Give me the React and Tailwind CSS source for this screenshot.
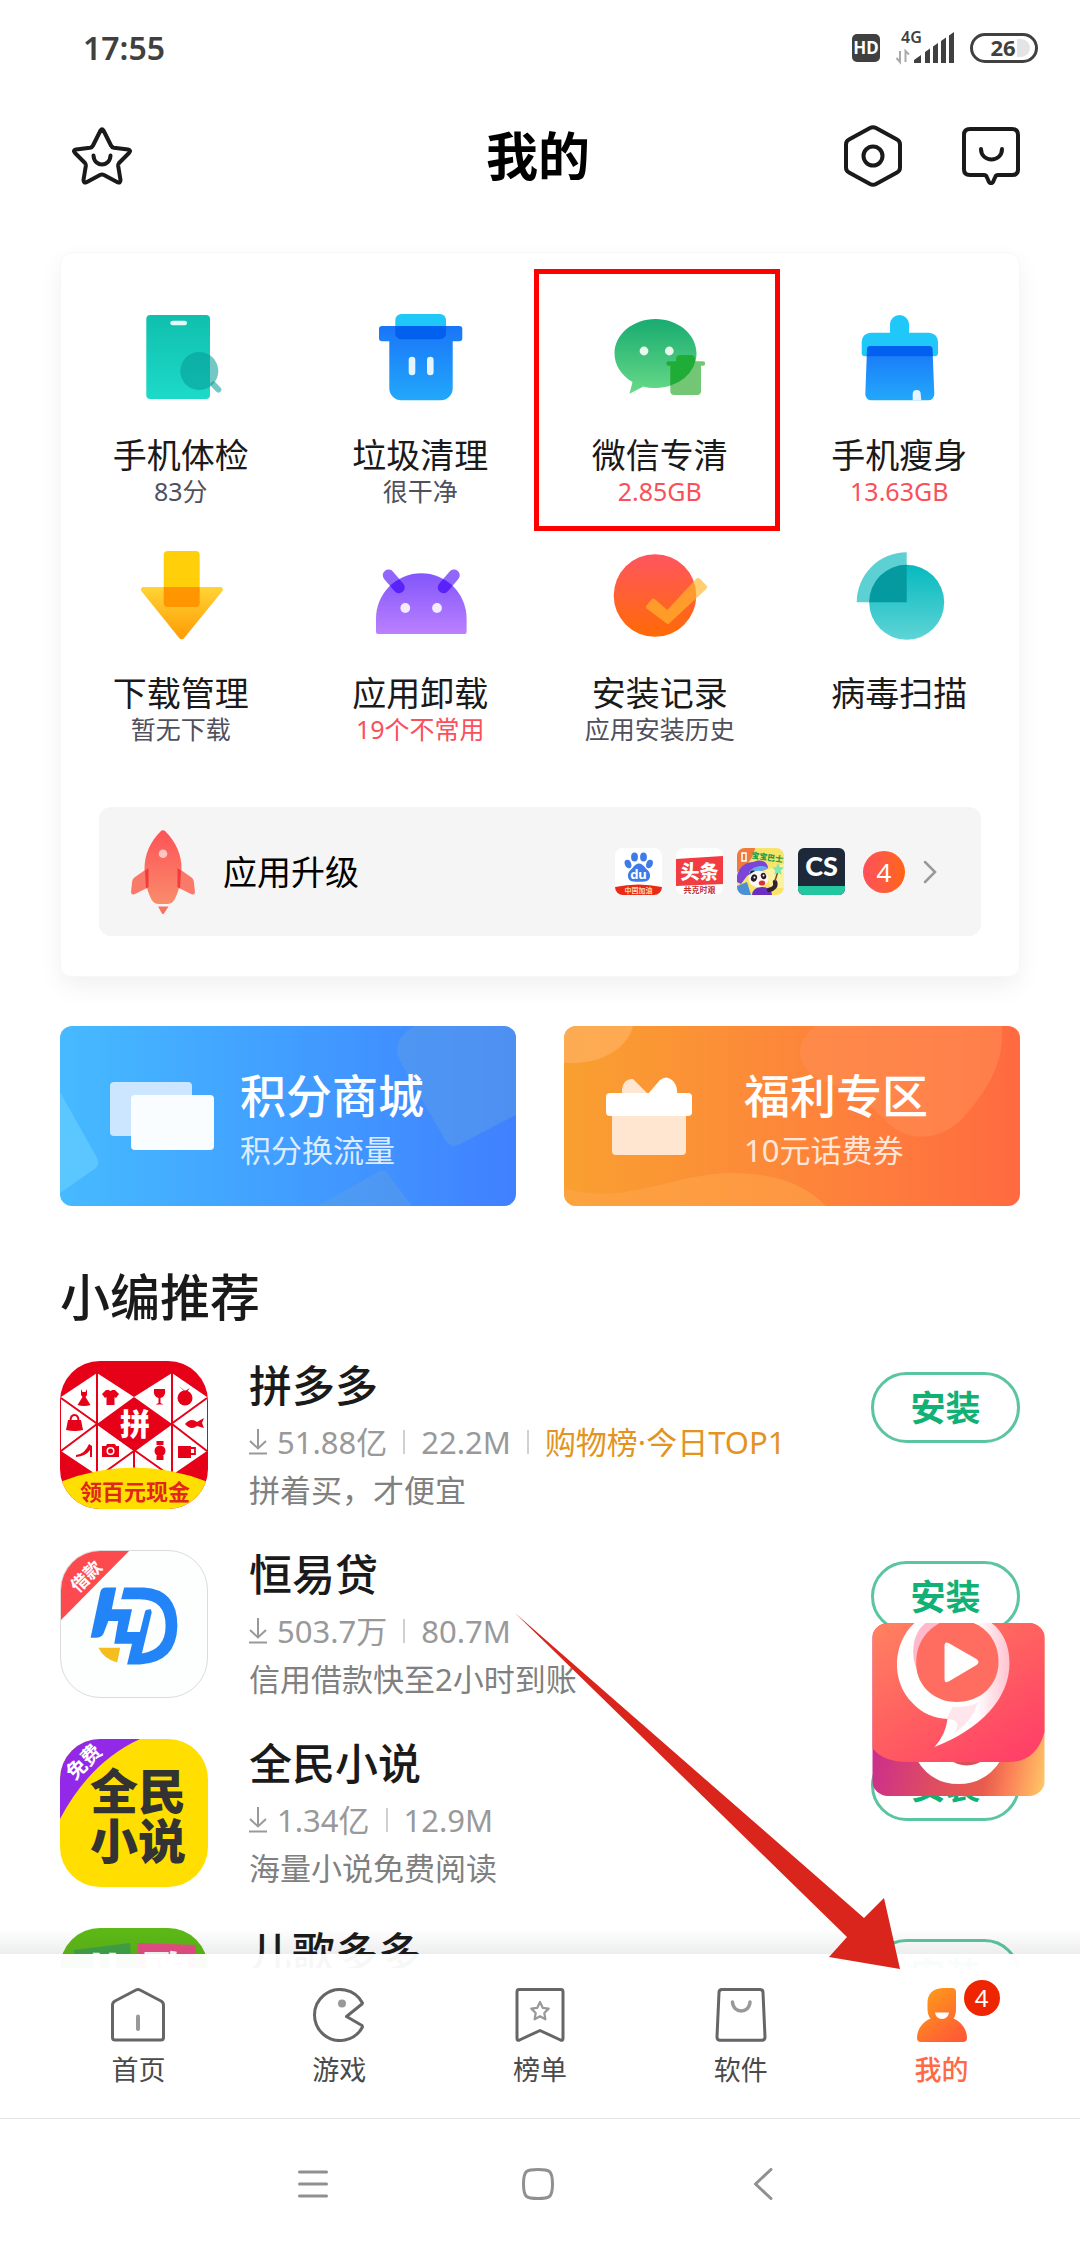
import React, { useState } from "react";

const HealthIcon = () => (
  <svg viewBox="0 0 96 96" className="size-24">
    <defs>
      <linearGradient id="health" x1="0" y1="0" x2="0" y2="1">
        <stop offset="0" stopColor="#10bfae" />
        <stop offset="1" stopColor="#1ddac8" />
      </linearGradient>
    </defs>
    <rect x="13.3" y="6" width="63.7" height="84" rx="4" fill="url(#health)" />
    <rect x="37.3" y="11.7" width="16.7" height="4.6" rx="2.3" fill="#e4faf7" />
    <circle cx="66.3" cy="62" r="19" fill="#069c96" fillOpacity="0.56" />
    <path d="M80.5 75.5l4.8 5" stroke="#069c96" strokeOpacity="0.56" strokeWidth="6" strokeLinecap="round" />
  </svg>
);

const TrashIcon = () => (
  <svg viewBox="0 0 96 96" className="size-24">
    <defs>
      <linearGradient id="trash" x1="0" y1="0" x2="0" y2="1">
        <stop offset="0" stopColor="#1a75f8" />
        <stop offset="1" stopColor="#22a8fb" />
      </linearGradient>
    </defs>
    <rect x="23.3" y="5" width="50.7" height="25" rx="6" fill="#1fc8f8" />
    <path
      d="M10 17H87.300a3 3 0 0 1 3 3V29.300a3 3 0 0 1-3 3H80.700V79.300a12 12 0 0 1-12 12H29.300a12 12 0 0 1-12-12V32.300H10a3 3 0 0 1-3-3V20a3 3 0 0 1 3-3z"
      fill="url(#trash)"
    />
    <path d="M23.300 17H74V24.300a6 6 0 0 1-6 6H29.300a6 6 0 0 1-6-6z" fill="#0260ee" />
    <rect x="36.7" y="47.700" width="6.600" height="18.600" rx="3.300" fill="#e6f4ff" />
    <rect x="55" y="47.700" width="6.600" height="18.600" rx="3.300" fill="#e6f4ff" />
  </svg>
);

const WechatIcon = () => (
  <svg viewBox="0 0 96 96" className="size-24">
    <defs>
      <linearGradient id="wechat" x1="0" y1="0" x2="0" y2="1">
        <stop offset="0" stopColor="#18ab70" />
        <stop offset="1" stopColor="#68da88" />
      </linearGradient>
      <clipPath id="bubble">
        <ellipse cx="43.5" cy="44.500" rx="41" ry="34.500" />
      </clipPath>
    </defs>
    <path
      d="M43.500 10C66.100 10 84.500 25.400 84.500 44.500S66.100 79 43.500 79C39.200 79 35.100 78.400 31.400 77.400L17.500 84.700L20.500 73C9.600 66.700 2.500 56.300 2.500 44.500C2.500 25.400 20.900 10 43.500 10z"
      fill="url(#wechat)"
    />
    <path
      d="M64 52V50a4 4 0 0 1 4-4H79a4 4 0 0 1 4 4V52.300H91a2.200 2.200 0 0 1 0 4.400H89V82a4 4 0 0 1-4 4H62.300a4 4 0 0 1-4-4V56.700H56.500a2.200 2.200 0 0 1 0-4.400H64z"
      fill="#73c774"
    />
    <path
      d="M64 52V50a4 4 0 0 1 4-4H79a4 4 0 0 1 4 4V52.300H91a2.200 2.200 0 0 1 0 4.400H89V82a4 4 0 0 1-4 4H62.300a4 4 0 0 1-4-4V56.700H56.500a2.200 2.200 0 0 1 0-4.400H64z"
      fill="#1fac37"
      clipPath="url(#bubble)"
    />
    <circle cx="32" cy="42" r="4.400" fill="#e9f9ee" />
    <circle cx="57.300" cy="42" r="4.400" fill="#e9f9ee" />
  </svg>
);

const BrushIcon = () => (
  <svg viewBox="-2 0 96 96" className="size-24">
    <path
      d="M37 23.700V15.500a9.500 9.500 0 0 1 19 0V23.700H76a9 9 0 0 1 9 9V44a3.300 3.300 0 0 1-3.300 3.300H12a3.300 3.300 0 0 1-3.300-3.300V32.700a9 9 0 0 1 9-9z"
      fill="#1fc8f8"
    />
    <path
      d="M17.500 37H76a3.500 3.500 0 0 1 3.500 3.500L81.300 85a6 6 0 0 1-6 6.300H18.300a6 6 0 0 1-6-6.300L14 40.500A3.500 3.500 0 0 1 17.500 37z"
      fill="url(#trash)"
    />
    <path d="M17.500 37H76a3.500 3.500 0 0 1 3.500 3.500L79.700 47.300H13.800L14 40.500A3.500 3.500 0 0 1 17.500 37z" fill="#0260ee" />
    <path d="M59.700 91.300V85a4 4 0 0 1 8 0L68.300 91.300z" fill="#e6f4ff" />
  </svg>
);

const DownloadIcon = () => (
  <svg viewBox="0 0 96 96" className="size-24">
    <defs>
      <linearGradient id="down" x1="0" y1="0" x2="0" y2="1">
        <stop offset="0" stopColor="#ffd435" />
        <stop offset="1" stopColor="#ff9b05" />
      </linearGradient>
    </defs>
    <rect x="30.700" y="4" width="36" height="56" rx="4" fill="#ffd00a" />
    <path
      d="M10.500 40H87.200a2.500 2.500 0 0 1 2 4.200L51 91.200a3 3 0 0 1-4.600 0L8.500 44.200a2.500 2.500 0 0 1 2-4.200z"
      fill="url(#down)"
    />
    <path d="M30.700 40H66.700V56a4 4 0 0 1-4 4H34.700a4 4 0 0 1-4-4z" fill="#ff9500" />
  </svg>
);

const UninstallIcon = () => (
  <svg viewBox="0 0 96 96" className="size-24">
    <defs>
      <linearGradient id="droid" x1="0" y1="0" x2="0" y2="1">
        <stop offset="0" stopColor="#8256fb" />
        <stop offset="1" stopColor="#bb80fe" />
      </linearGradient>
      <clipPath id="dome">
        <path d="M4 71.500a45.300 45.300 0 0 1 90.600 0V87H4z" />
      </clipPath>
    </defs>
    <g stroke="#9066fb" strokeWidth="11.500" strokeLinecap="round">
      <path d="M16.500 28.300L27 40.500" />
      <path d="M82 28.300L71.500 40.500" />
    </g>
    <path d="M4 71.500a45.300 45.300 0 0 1 90.600 0V85a2 2 0 0 1-2 2H6a2 2 0 0 1-2-2z" fill="url(#droid)" />
    <g stroke="#5a22fb" strokeWidth="11.500" strokeLinecap="round" clipPath="url(#dome)">
      <path d="M16.500 28.300L27 40.500" />
      <path d="M82 28.300L71.500 40.500" />
    </g>
    <circle cx="33.300" cy="61" r="4.900" fill="#f3ecff" />
    <circle cx="65" cy="61" r="4.900" fill="#f3ecff" />
  </svg>
);

const RecordIcon = () => (
  <svg viewBox="0 0 96 96" className="size-24">
    <defs>
      <linearGradient id="record" x1="0" y1="0" x2="0" y2="1">
        <stop offset="0" stopColor="#ff5560" />
        <stop offset="1" stopColor="#ff6b05" />
      </linearGradient>
    </defs>
    <circle cx="43" cy="48.500" r="41.300" fill="url(#record)" />
    <path
      d="M34.500 61.500Q33.500 60 34.500 58.500L39.500 52.500Q41 50.800 43 52.300L55.300 63L84 32Q86 30 88 31.800L94.500 38.500Q96 40.500 94 42.300L56 77.500z"
      fill="#ffb72e"
      fillOpacity="0.68"
    />
  </svg>
);

const VirusIcon = () => (
  <svg viewBox="-2 0 96 96" className="size-24">
    <defs>
      <linearGradient id="virus" x1="0" y1="0" x2="0" y2="1">
        <stop offset="0" stopColor="#05babf" />
        <stop offset="1" stopColor="#5fd4d6" />
      </linearGradient>
    </defs>
    <path d="M53.700 5.300V55.300H3.700a50 50 0 0 1 50-50z" fill="#5dd0d4" />
    <circle cx="53.700" cy="55.300" r="37.500" fill="url(#virus)" />
    <path d="M53.700 17.800V55.300H16.200a37.500 37.500 0 0 1 37.500-37.500z" fill="#0599a0" />
  </svg>
);

const RocketIcon = () => (
  <svg viewBox="0 0 64 84" className="h-[84px] w-16 shrink-0">
    <defs>
      <linearGradient id="rocket" x1="0" y1="0" x2="0" y2="1">
        <stop offset="0" stopColor="#fd5357" />
        <stop offset="1" stopColor="#fa8c6b" />
      </linearGradient>
    </defs>
    <path d="M17 38L4 47Q1 49 1 53L0 62Q0 65 3 64.500L18 57z" fill="#fa7a6a" />
    <path d="M47 38L60 47Q63 49 63 53L64 62Q64 65 61 64.500L46 57z" fill="#fa7a6a" />
    <path
      d="M29.500 1.500Q32-1 34.500 1.500C45 12 50.500 25 50.500 38C50.500 50 48 61 43.500 69.500Q41 74 36 74H28Q23 74 20.500 69.500C16 61 13.500 50 13.500 38C13.500 25 19 12 29.500 1.500z"
      fill="url(#rocket)"
    />
    <path d="M14 40.500L17.500 38V57L15 58.500z" fill="#f5393c" />
    <path d="M50 40.500L46.500 38V57L49 58.500z" fill="#f5393c" />
    <path d="M27 76.500H37.500L33 83.500Q32 84.500 31 83.500z" fill="#fa7262" />
    <circle cx="32" cy="23.700" r="4.300" fill="#fdc4c0" />
  </svg>
);

const BaiduIcon = () => (
  <svg viewBox="0 0 47 47" className="size-[47px] rounded-lg bg-white">
    <g fill="#3f7be8">
      <ellipse cx="19.500" cy="9" rx="3.400" ry="4.600" />
      <ellipse cx="28.500" cy="9" rx="3.400" ry="4.600" />
      <ellipse cx="13" cy="16" rx="3.200" ry="4.400" transform="rotate(-20 13 16)" />
      <ellipse cx="34.500" cy="16" rx="3.200" ry="4.400" transform="rotate(20 34.500 16)" />
      <path d="M24 15.500c4 0 5.500 4 8.500 6.500c4 3.500 3.500 11-2.500 11.500c-4 .3-8 .3-12 0c-6-.5-6.500-8-2.500-11.500c3-2.500 4.500-6.500 8.500-6.500z" />
    </g>
    <text x="23.500" y="31" fontSize="13" fontWeight="700" fill="#fff" textAnchor="middle">du</text>
    <path d="M0 39Q23 34 47 39V47H0z" fill="#e92a17" />
    <text x="23.500" y="45" fontSize="7" fontWeight="700" fill="#ffd9b0" textAnchor="middle">中国加油</text>
  </svg>
);

const ToutiaoIcon = () => (
  <svg viewBox="0 0 47 47" className="size-[47px] rounded-lg bg-white">
    <path d="M0 11L47 8V36L0 38z" fill="#f23c41" />
    <text x="23.500" y="31" fontSize="19" fontWeight="900" fill="#fff" textAnchor="middle">头条</text>
    <text x="23.500" y="45" fontSize="8" fontWeight="700" fill="#c8312f" textAnchor="middle">共克时艰</text>
  </svg>
);

const BabyBusIcon = () => (
  <svg viewBox="0 0 47 47" className="size-[47px] rounded-lg bg-[#f9e46a]">
    <path d="M0 0H18Q16 14 0 24z" fill="#f0793c" />
    <path d="M5 5h4v8h-4z" fill="none" stroke="#fff" strokeWidth="1.500" />
    <path d="M28 22L47 16V40L34 40z" fill="#fbf2a0" />
    <text x="14" y="10" fontSize="8" fontWeight="900" fill="#1fa04c" transform="rotate(8 14 10)">宝宝巴士</text>
    <path d="M0 28C2 18 10 14 16 14C24 10 31 14 31 20C26 24 18 22 10 28L4 36L0 34z" fill="#7b45d8" />
    <path d="M12 24C16 18 26 16 31 20C26 24 20 22 14 28z" fill="#66a9ee" />
    <path d="M0 47V38L10 34L14 47z" fill="#4b8fd6" />
    <path d="M15 47Q16 39 25 39T35 47z" fill="#6b2fc0" />
    <ellipse cx="16" cy="25" rx="2.800" ry="2.400" fill="#231b28" />
    <ellipse cx="21.500" cy="31" rx="10" ry="8.200" fill="#fff7f2" />
    <ellipse cx="17" cy="30" rx="3" ry="3.700" fill="#231b28" transform="rotate(20 17 30)" />
    <ellipse cx="26.500" cy="28" rx="2.600" ry="3.300" fill="#231b28" transform="rotate(-20 26.500 28)" />
    <circle cx="17.500" cy="29.500" r="1" fill="#fff" />
    <circle cx="26.500" cy="27.500" r="1" fill="#fff" />
    <ellipse cx="25" cy="35" rx="3.200" ry="2.600" fill="#d8323c" />
    <path d="M32 42Q40 40 38 34" stroke="#33222e" strokeWidth="4.500" strokeLinecap="round" fill="none" />
    <path d="M38 33L41 23" stroke="#7a4a20" strokeWidth="1.500" />
    <path d="M41 15l1.800 4 4 .5-3 3 .8 4.200-3.600-2-3.600 2 .8-4.200-3-3 4-.5z" fill="#7fe8b0" />
  </svg>
);

const CamScannerIcon = () => (
  <svg viewBox="0 0 47 47" className="size-[47px] rounded-md bg-[#1d2939]">
    <rect y="38" width="47" height="9" fill="#24c6a0" />
    <text x="23.500" y="28" fontSize="27" fontWeight="900" fill="#fff" textAnchor="middle" className="font-[Lato,sans-serif]">
      CS
    </text>
  </svg>
);

const PddIcon = () => (
  <svg viewBox="0 0 148 148" className="size-[148px] shrink-0 rounded-[40px] bg-[#e60018]">
    <path d="M1 36L37 12L74 36L112 12L147 36V90L112 114H37L1 90z" fill="#fff" />
    <path d="M74 36L112 63L74 90L37 63z" fill="#e60018" />
    <g stroke="#e60018" strokeWidth="2" fill="none">
      <path d="M37 10V114M112 10V114M74 90V110" />
      <path d="M1 37L112 116M147 37L38 116M1 90L37 63M147 90L112 63" />
    </g>
    <g fill="#e60018">
      {/* 连衣裙、T恤、酒杯、水果 */}
      <path d="M21 28l1.500 3h3l1.500-3v6l-1.500 2l5 8q-6.500 2-13 0l5-8l-1.500-2z" />
      <path d="M46 29h3q1.500 2 3 0h3l4 4-3 4-1.500-1v8h-8v-8l-1.500 1-3-4z" />
      <path d="M94 28h11q1 8-4.500 9v5l3 1.500h-8l3-1.500v-5q-5.500-1-4.500-9z" />
      <circle cx="125" cy="37" r="7.500" />
      <path d="M119 25l6 5 5-3-4 5z" />
      {/* 手提包、鱼 */}
      <path d="M8 59h13l2 10q-8 2-17 0z" />
      <path d="M10.500 60q0-6 4-6t4 6" fill="none" stroke="#e60018" strokeWidth="2" />
      <path d="M125 63q6-7 12-2l7-4-2 5 2 5-7-2q-6 5-12-2z" />
      {/* 高跟鞋、相机 */}
      <path d="M16 94q9-1 13-11l3 2v11h-2v-7q-4 6-14 7z" />
      <path d="M42 85h4l1-2h8l1 2h3v11H42z" />
      <circle cx="50.500" cy="90" r="4" fill="#fff" />
      <circle cx="50.500" cy="90" r="2.500" />
      {/* 手表、茶杯 */}
      <circle cx="100" cy="90" r="5.500" />
      <path d="M96.500 80h7v4h-7zM96.500 95h7v4h-7z" />
      <path d="M118 85h13v12h-13z" />
    </g>
    <path d="M131 87h4v6h-4" fill="none" stroke="#e60018" strokeWidth="1.800" />
    <text x="75" y="74" fontSize="30" fontWeight="900" fill="#fff" textAnchor="middle">拼</text>
    <path d="M0 121Q74 92 148 121V148H0z" fill="#ffdf00" />
    <text x="75" y="139" fontSize="22" fontWeight="700" fill="#e1261c" textAnchor="middle">领百元现金</text>
  </svg>
);

const LoanIcon = () => (
  <svg viewBox="0 0 148 148" className="size-[148px] shrink-0 rounded-[40px] border border-[#dcdcdc] bg-[#fdfefe]">
    <path d="M0 0H69L0 70z" fill="#fd4a4e" />
    <text x="26" y="32" fontSize="18" fontWeight="700" fill="#fff" textAnchor="middle" transform="rotate(-45 26 26)">
      借款
    </text>
    <path
      d="M46 37H56L51.500 59H72L67 82H80L85 62Q85 59 91 59L92 62L82 104Q106 100 106 76Q106 49 80 49H61L64 37H84Q118 39 118 76Q117 113 80 115H67L72 94H54L58 71H48L43 84Q41 88 35 88H30L40 41Q41 37 46 37z"
      fill="#2384f7"
    />
    <path d="M38 98H60L57 113Q43 109 38 98z" fill="#f5be1c" />
  </svg>
);

const NovelIcon = () => (
  <svg viewBox="0 0 148 148" className="size-[148px] shrink-0 rounded-[40px] bg-[#ffde00]">
    <path d="M0 0H80Q30 23 0 80z" fill="#9329e8" />
    <text x="24" y="30" fontSize="20" fontWeight="700" fill="#fff" textAnchor="middle" transform="rotate(-45 24 23)">
      免费
    </text>
    <g fontSize="48" fontWeight="900" fill="#333" textAnchor="middle">
      <text x="78" y="70">全民</text>
      <text x="78" y="120">小说</text>
    </g>
  </svg>
);

const SongIcon = () => (
  <svg viewBox="0 0 148 148" className="size-[148px] shrink-0 rounded-[40px] bg-[#5db916]">
    <path d="M14 22L70 15L74 78L18 82z" fill="#3fa347" />
    <path d="M78 15L136 17L132 80L76 76z" fill="#e84d84" />
    <g fontSize="46" fontWeight="900" fill="#fff" textAnchor="middle">
      <text x="45" y="62">儿</text>
      <text x="106" y="62">歌</text>
    </g>
  </svg>
);

const HomeTab = () => (
  <svg viewBox="0 0 54 54" className="size-[54px]" fill="none" stroke="#666" strokeWidth="3" strokeLinejoin="round" strokeLinecap="round">
    <path d="M25 2Q27 1 29 2L50 13Q52.500 14.500 52.500 17V49.500Q52.500 52 50 52H4Q1.500 52 1.500 49.500V17Q1.500 14.500 4 13z" />
    <path d="M27 28.500V41" stroke="#999" strokeWidth="4" />
  </svg>
);

const GameTab = () => (
  <svg viewBox="0 0 54 54" className="size-[54px]" fill="none" stroke="#666" strokeWidth="3" strokeLinejoin="round" strokeLinecap="round">
    <path d="M50.500 15A25.500 25.500 0 1 0 50.500 39L50 37.500L34.500 28.500L50 16z" />
    <circle cx="30" cy="15.500" r="4" fill="#999" stroke="none" />
  </svg>
);

const RankTab = () => (
  <svg viewBox="0 0 54 54" className="size-[54px]" fill="none" stroke="#666" strokeWidth="3" strokeLinejoin="round">
    <path d="M6 1.500H48Q50 1.500 50 4V50.500Q50 53 47.500 52L27 42.500L6.500 52Q4 53 4 50.500V4Q4 1.500 6 1.500z" />
    <path d="M27 14l2.700 5.800 6 .8-4.400 4.400 1.100 6.300-5.400-3-5.400 3 1.100-6.300-4.400-4.400 6-.8z" stroke="#999" strokeWidth="2.200" />
  </svg>
);

const SoftTab = () => (
  <svg viewBox="0 0 54 54" className="size-[54px]" fill="none" stroke="#666" strokeWidth="3" strokeLinejoin="round" strokeLinecap="round">
    <path d="M8 1.500H46Q49 1.500 49 4.500L51 49Q51 52.300 48 52.300H6Q3 52.300 3 49L5 4.500Q5 1.500 8 1.500z" />
    <path d="M18.500 14C19 26 35.500 26 36 14" stroke="#999" strokeWidth="3.500" />
  </svg>
);

const MineTab = () => (
  <svg viewBox="0 0 54 54" className="size-[54px]">
    <defs>
      <linearGradient id="mine" x1="0" y1="0" x2="0.7" y2="1">
        <stop offset="0" stopColor="#ffa116" />
        <stop offset="1" stopColor="#ff5c35" />
      </linearGradient>
    </defs>
    <path
      d="M28 0H37Q41 0 41 4V21Q41 27 38.500 30.500C47 34 52 42 52 50Q52 54 48 54H6Q2 54 2 50C2 42 7 34 15.500 30.500Q12.500 27 12.500 21V15Q12.500 1 28 0z"
      fill="url(#mine)"
    />
    <path d="M20 24.500H34Q33 31 27 31T20 24.500z" fill="#fff" />
  </svg>
);

const tools = [
  { name: "手机体检", note: "83分", Icon: HealthIcon },
  { name: "垃圾清理", note: "很干净", Icon: TrashIcon },
  { name: "微信专清", note: "2.85GB", warn: true, marked: true, Icon: WechatIcon },
  { name: "手机瘦身", note: "13.63GB", warn: true, Icon: BrushIcon },
  { name: "下载管理", note: "暂无下载", Icon: DownloadIcon },
  { name: "应用卸载", note: "19个不常用", warn: true, Icon: UninstallIcon },
  { name: "安装记录", note: "应用安装历史", Icon: RecordIcon },
  { name: "病毒扫描", note: "", Icon: VirusIcon },
];

const apps = [
  { name: "拼多多", count: "51.88亿", size: "22.2M", rank: "购物榜·今日TOP1", desc: "拼着买，才便宜", Icon: PddIcon },
  { name: "恒易贷", count: "503.7万", size: "80.7M", desc: "信用借款快至2小时到账", Icon: LoanIcon },
  { name: "全民小说", count: "1.34亿", size: "12.9M", desc: "海量小说免费阅读", Icon: NovelIcon },
  { name: "儿歌多多", Icon: SongIcon },
];

const tabs = [
  { name: "首页", Icon: HomeTab },
  { name: "游戏", Icon: GameTab },
  { name: "榜单", Icon: RankTab },
  { name: "软件", Icon: SoftTab },
  { name: "我的", badge: 4, Icon: MineTab },
];

function StatusBar() {
  return (
    <div className="flex h-24 shrink-0 items-center justify-between pr-[42px] pl-[83px] text-[#404040]">
      <span className="text-[32px] leading-10 font-semibold">17:55</span>
      <div className="flex items-center gap-4">
        <svg viewBox="0 0 28 28" className="size-7">
          <rect width="28" height="28" rx="5" fill="#404040" />
          <text x="14" y="20" fontSize="17" fontWeight="700" fill="#fff" textAnchor="middle">HD</text>
        </svg>
        <svg viewBox="0 0 58 32" className="h-8 w-[58px] overflow-visible">
          <text x="5" y="11" fontSize="16" fontWeight="600" fill="#404040">4G</text>
          <path d="M4 19V30L0.500 26M9.500 30V19L13 22.500" fill="none" stroke="#aaa" strokeWidth="2" />
          <path d="M18 31V28L25 23V31zM29 31V20L34 16.500V31zM37 31V14.500L42 11V31zM45 31V9L50 5.500V31zM53 31V3.500L58 0V31z" fill="#404040" />
        </svg>
        <svg viewBox="0 0 68 30" className="h-[30px] w-[68px]">
          <path d="M47 6H51a9 9 0 0 1 0 18H47z" fill="#e4e4e4" />
          <rect x="1.500" y="1.500" width="65" height="27" rx="13.500" fill="none" stroke="#404040" strokeWidth="3" />
          <text x="33" y="23" fontSize="22" fontWeight="700" fill="#404040" textAnchor="middle">26</text>
        </svg>
      </div>
    </div>
  );
}

function Header() {
  return (
    <header className="grid h-[120px] shrink-0 grid-cols-[1fr_auto_1fr] items-center pr-[60px] pl-14">
      <button aria-label="收藏" className="justify-self-start pl-4">
        <svg viewBox="0 0 60 58" className="h-[58px] w-[60px]" fill="none" stroke="#1a1a1a" strokeWidth="4" strokeLinejoin="round" strokeLinecap="round">
          <path d="M28.500 3.500Q30 1 31.500 3.500L39 18.500Q40 20.500 42 20.800L56 22.500Q59.500 23.300 57 26L47 36Q46 37.500 46.200 39L48.500 53Q48.500 56.500 45.500 55.200L32 48Q30 47 28 48L14.500 55.200Q11.500 56.500 11.500 53L13.800 39Q14 37.500 13 36L3 26Q0.500 23.300 4 22.500L18 20.800Q20 20.500 21 18.500z" />
          <path d="M21.500 28.500C22 40.500 38 40.500 38.500 28.500" />
        </svg>
      </button>
      <h1 className="text-[52px] leading-[60px] font-bold text-black">我的</h1>
      <div className="flex items-center gap-[60px] justify-self-end">
        <button aria-label="设置">
          <svg viewBox="0 0 58 62" className="h-[62px] w-[58px]" fill="none" stroke="#1a1a1a" strokeWidth="4" strokeLinejoin="round">
            <path d="M26 3Q29 1.300 32 3L53 14.500Q56 16 56 19.500V42.500Q56 46 53 47.500L32 59Q29 60.700 26 59L5 47.500Q2 46 2 42.500V19.500Q2 16 5 14.500z" />
            <circle cx="29" cy="31" r="9.500" />
          </svg>
        </button>
        <button aria-label="消息">
          <svg viewBox="0 0 58 58" className="size-[58px]" fill="none" stroke="#1a1a1a" strokeWidth="4" strokeLinejoin="round" strokeLinecap="round">
            <path d="M8 2H50Q56 2 56 8V42.500Q56 48 50 48H36Q34 48 33.200 50L31 55Q29 57.500 27 55L24.800 50Q24 48 22 48H8Q2 48 2 42.500V8Q2 2 8 2z" />
            <path d="M19 22C19 36 40 36 40 22" />
          </svg>
        </button>
      </div>
    </header>
  );
}

function ToolCard() {
  return (
    <section className="mx-[60px] mt-9 rounded-xl border border-[#f7f7f7] pt-14 pb-10 shadow-[0_10px_24px_rgba(0,0,0,0.06)]">
      <div className="grid grid-cols-4 gap-y-10">
        {tools.map(({ name, note, warn, marked, Icon }) => (
          <button key={name} className="relative flex flex-col items-center">
            <Icon />
            <span className="mt-[30px] text-[34px] leading-10 text-[#1a1a1a]">{name}</span>
            <span className={`text-[25px] leading-8 ${warn ? "text-[#f9505a]" : "text-[#50505c]"}`}>{note}</span>
            {marked && <span className="absolute -top-10 right-0 -bottom-6 -left-[6px] border-[5px] border-[#ff0000]" />}
          </button>
        ))}
      </div>
      <div className="mt-[62px] px-[38px]">
        <button className="flex h-[129px] w-full items-center rounded-xl bg-[#f5f5f5] pr-11 pl-8">
          <RocketIcon />
          <span className="ml-7 text-[34px] leading-10 text-black">应用升级</span>
          <span className="ml-auto flex items-center gap-[14px]">
            <BaiduIcon />
            <ToutiaoIcon />
            <BabyBusIcon />
            <CamScannerIcon />
          </span>
          <span className="ml-[18px] flex size-[42px] items-center justify-center rounded-full bg-linear-to-r from-[#ff5058] to-[#ff650a] text-[26px] leading-8 text-white">
            4
          </span>
          <svg viewBox="0 0 14 24" className="ml-[18px] h-6 w-[14px]" fill="none" stroke="#999" strokeWidth="2.500" strokeLinecap="round">
            <path d="M2 2L12 12L2 22" />
          </svg>
        </button>
      </div>
    </section>
  );
}

function Banners() {
  return (
    <section className="mx-[60px] mt-[49px] grid grid-cols-2 gap-12">
      <button className="relative flex h-[180px] items-center overflow-hidden rounded-xl bg-linear-to-r from-[#46baff] to-[#4080ff] pl-[50px] text-left text-white">
        <svg viewBox="0 0 456 180" preserveAspectRatio="none" className="absolute inset-0 size-full">
          <path d="M354 0Q330 15 340 35L384 112Q390 125 402 117L456 89V0z" fill="#5a9de8" fillOpacity="0.55" />
          <path d="M0 66L36 130Q41 137 36 142L0 167z" fill="#6bd0ff" fillOpacity="0.6" />
          <path d="M257 180L318 146Q325 142 329 149L352 180z" fill="#5a9de8" fillOpacity="0.5" />
        </svg>
        <svg viewBox="0 0 104 68" className="relative h-[68px] w-[104px]">
          <rect width="82" height="54" rx="4" fill="#cde6ff" />
          <rect x="21" y="13" width="83" height="55" rx="4" fill="#fafdff" />
        </svg>
        <span className="relative ml-[26px] flex flex-col pt-2">
          <span className="text-[46px] leading-[60px] font-medium">积分商城</span>
          <span className="text-[31px] leading-[50px] text-[#dcecff]">积分换流量</span>
        </span>
      </button>
      <button className="relative flex h-[180px] items-center overflow-hidden rounded-xl bg-linear-to-r from-[#f9a030] to-[#ff6a40] pl-[42px] text-left text-white">
        <svg viewBox="0 0 456 180" preserveAspectRatio="none" className="absolute inset-0 size-full">
          <ellipse cx="10" cy="-8" rx="60" ry="45" fill="#ffb061" fillOpacity="0.7" />
          <path d="M252 0C225 20 235 45 262 56C300 70 310 84 325 98C350 120 385 112 405 85C430 55 440 30 438 0z" fill="#ff9058" fillOpacity="0.5" />
          <path d="M0 162C60 180 110 148 165 147C215 146 245 162 262 180H0z" fill="#ffa64a" fillOpacity="0.55" />
        </svg>
        <svg viewBox="0 0 86 78" className="relative h-[78px] w-[86px]">
          <rect x="6" y="30" width="74" height="48" rx="4" fill="#ffe6d0" />
          <path d="M16 20V12Q18 1 27 2L43 18z" fill="#ffe6d0" />
          <path d="M42 17L54 3Q60-2 66 3Q72 8 71 18L60 20z" fill="#fff" />
          <rect y="16" width="86" height="23" rx="4" fill="#fff" />
        </svg>
        <span className="relative ml-[52px] flex flex-col pt-2">
          <span className="text-[46px] leading-[60px] font-medium">福利专区</span>
          <span className="text-[31px] leading-[50px] text-[#ffe6d8]">10元话费券</span>
        </span>
      </button>
    </section>
  );
}

function AppRow({ app }) {
  const { name, count, size, rank, desc, Icon } = app;
  return (
    <li className="flex items-start">
      <Icon />
      <div className="ml-[41px] h-[153px] flex-1">
        <h3 className="text-[43px] leading-[50px] font-medium text-[#1a1a1a]">{name}</h3>
        {count && (
          <p className="mt-[7px] flex items-center text-[31px] leading-[48px] text-[#999]">
            <svg viewBox="0 0 18 26" className="mr-[10px] h-[26px] w-[18px]" fill="none" stroke="#999" strokeWidth="2">
              <path d="M9 0V19M1 12L9 19.500L17 12M0 24.500H18" />
            </svg>
            {count}
            <i className="mx-4 h-6 w-[2px] bg-[#d0d0d0]" />
            {size}
            {rank && (
              <>
                <i className="mx-4 h-6 w-[2px] bg-[#d0d0d0]" />
                <span className="text-[#e39420]">{rank}</span>
              </>
            )}
          </p>
        )}
        {desc && <p className="text-[31px] leading-[48px] text-[#808080]">{desc}</p>}
      </div>
      <button className="mt-[11px] h-[71px] w-[149px] rounded-full border-3 border-[#5bc5a0] text-[35px] leading-10 font-bold text-[#11b075]">
        安装
      </button>
    </li>
  );
}

// 悬浮广告
function FloatingAd() {
  return (
    <a href="#ad" aria-label="广告" className="absolute right-[35px] bottom-[452px] overflow-hidden rounded-2xl">
      <svg viewBox="0 0 172 173" className="size-[173px]">
        <defs>
          <linearGradient id="adBack" gradientUnits="userSpaceOnUse" x1="0" y1="139" x2="172" y2="173">
            <stop offset="0" stopColor="#cc2f8b" />
            <stop offset="0.35" stopColor="#de4c62" />
            <stop offset="0.65" stopColor="#e85c4c" />
            <stop offset="0.78" stopColor="#fb8058" />
            <stop offset="1" stopColor="#ffca66" />
          </linearGradient>
          <linearGradient id="adFront" x1="0" y1="0" x2="0.8" y2="1">
            <stop offset="0" stopColor="#ff8260" />
            <stop offset="0.5" stopColor="#ff6160" />
            <stop offset="1" stopColor="#ff4168" />
          </linearGradient>
          <linearGradient id="adRing" x1="0" y1="0" x2="1" y2="0">
            <stop offset="0.7" stopColor="#fff" />
            <stop offset="1" stopColor="#ffc2d0" />
          </linearGradient>
        </defs>
        <rect width="172" height="173" fill="url(#adBack)" />
        <path d="M44 136Q58 161 86 161T129 136z" fill="#fff" />
        <path d="M76 136Q94 149 113 136z" fill="#d85058" />
        <path d="M0 0H172V109Q164 139 136 139H36Q10 139 0 125z" fill="url(#adFront)" />
        <path d="M42 0C20 20 18 58 40 80C50 91 62 95 75 96Q73 112 62 124C108 106 137 76 137 40C137 22 130 8 119 0z" fill="url(#adRing)" />
        <path d="M53 0C40 10 38 30 44 46C46 25 52 10 67 0z" fill="#ffb9cb" />
        <path d="M80 84Q100 84 105 79Q102 96 82 110Q90 96 74 96z" fill="#ffd5df" fillOpacity="0.6" />
        <path d="M67 0C50 10 42 25 44 46C47 66 64 79 84 79C108 79 126 62 126 39C126 20 116 6 101 0z" fill="#ff6c60" />
        <path d="M76 20Q72 18 72 23V56Q72 61 77 58L104 42Q108 39 104 36z" fill="#fff" />
      </svg>
    </a>
  );
}

function TabBar({ active, onChange }) {
  return (
    <nav className="relative -mt-[14px] shrink-0 border-b border-[#e2e2e2] bg-white/97">
      <div className="pointer-events-none absolute inset-x-0 -top-[26px] h-[26px] bg-linear-to-b from-transparent to-[#1c2430]/8" />
      <div className="grid grid-cols-5 px-[38px] pt-[34px] pb-8">
        {tabs.map(({ name, badge, Icon }) => (
          <button key={name} onClick={() => onChange(name)} className="flex flex-col items-center">
            <span className="relative">
              <Icon />
              {badge && (
                <span className="absolute -top-2 left-[49px] flex size-9 items-center justify-center rounded-full bg-[#ee2500] text-2xl leading-8 text-white">
                  {badge}
                </span>
              )}
            </span>
            <span className={`mt-3 text-[27px] leading-8 ${active === name ? "font-medium text-[#ff6a45]" : "text-[#4a4a4a]"}`}>
              {name}
            </span>
          </button>
        ))}
      </div>
    </nav>
  );
}

function SystemBar() {
  return (
    <div className="grid h-[129px] shrink-0 grid-cols-3 items-center justify-items-center bg-white pr-[204px] pl-[200px]">
      <button aria-label="菜单">
        <svg viewBox="0 0 32 32" className="size-8" stroke="#909090" strokeWidth="3" strokeLinecap="round">
          <path d="M2.500 4H29.500M2.500 16H29.500M2.500 28H29.500" />
        </svg>
      </button>
      <button aria-label="主屏幕">
        <svg viewBox="0 0 32 32" className="size-8" fill="none" stroke="#909090" strokeWidth="3">
          <path d="M16 1.500C27 1.500 30.500 2 30.500 16S27 30.500 16 30.500S1.500 30 1.500 16S5 1.500 16 1.500z" />
        </svg>
      </button>
      <button aria-label="返回">
        <svg viewBox="0 0 32 32" className="size-8" fill="none" stroke="#909090" strokeWidth="3" strokeLinecap="round" strokeLinejoin="round">
          <path d="M24 1.500L8.500 16L24 30.500" />
        </svg>
      </button>
    </div>
  );
}

function App() {
  const [active, setActive] = useState("我的");

  return (
    <div className="relative flex h-screen flex-col overflow-hidden bg-white font-['Noto_Sans','Noto_Sans_CJK_SC',sans-serif]">
      <StatusBar />
      <Header />
      <main className="min-h-0 flex-1 overflow-hidden">
        <ToolCard />
        <Banners />
        <section className="mx-[60px] mt-[61px]">
          <h2 className="text-[50px] leading-[60px] font-medium text-[#1a1a1a]">小编推荐</h2>
          <ul className="mt-[34px] flex flex-col gap-9">
            {apps.map((app) => (
              <AppRow key={app.name} app={app} />
            ))}
          </ul>
        </section>
      </main>
      <TabBar active={active} onChange={setActive} />
      <SystemBar />
      <FloatingAd />
      {/* 指向“我的”的箭头 */}
      <svg viewBox="0 0 385 356" className="pointer-events-none absolute right-[180px] bottom-[279px] h-[356px] w-[385px]">
        <path d="M0 0L349 305L369 285L385 356L314 344L332 324z" fill="#d9251c" />
      </svg>
    </div>
  );
}

export default App;
